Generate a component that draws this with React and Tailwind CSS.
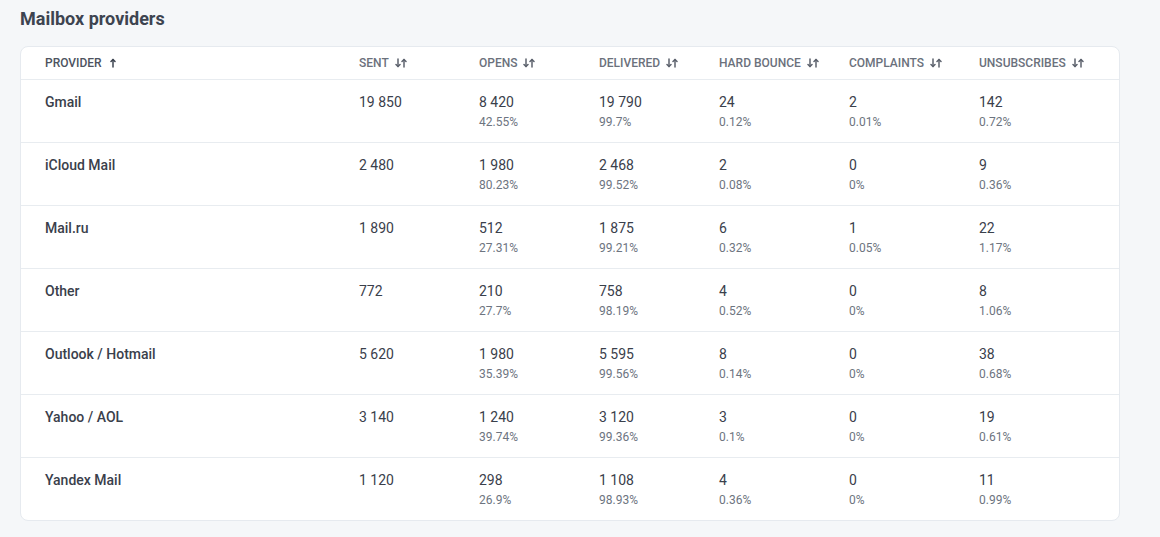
const COLUMNS = [
  { key: "sent", label: "Sent" },
  { key: "opens", label: "Opens" },
  { key: "delivered", label: "Delivered" },
  { key: "hard", label: "Hard bounce" },
  { key: "complaints", label: "Complaints" },
  { key: "unsubs", label: "Unsubscribes" },
];

const ROWS = [
  { name: "Gmail", sent: ["19 850"], opens: ["8 420", "42.55%"], delivered: ["19 790", "99.7%"], hard: ["24", "0.12%"], complaints: ["2", "0.01%"], unsubs: ["142", "0.72%"] },
  { name: "iCloud Mail", sent: ["2 480"], opens: ["1 980", "80.23%"], delivered: ["2 468", "99.52%"], hard: ["2", "0.08%"], complaints: ["0", "0%"], unsubs: ["9", "0.36%"] },
  { name: "Mail.ru", sent: ["1 890"], opens: ["512", "27.31%"], delivered: ["1 875", "99.21%"], hard: ["6", "0.32%"], complaints: ["1", "0.05%"], unsubs: ["22", "1.17%"] },
  { name: "Other", sent: ["772"], opens: ["210", "27.7%"], delivered: ["758", "98.19%"], hard: ["4", "0.52%"], complaints: ["0", "0%"], unsubs: ["8", "1.06%"] },
  { name: "Outlook / Hotmail", sent: ["5 620"], opens: ["1 980", "35.39%"], delivered: ["5 595", "99.56%"], hard: ["8", "0.14%"], complaints: ["0", "0%"], unsubs: ["38", "0.68%"] },
  { name: "Yahoo / AOL", sent: ["3 140"], opens: ["1 240", "39.74%"], delivered: ["3 120", "99.36%"], hard: ["3", "0.1%"], complaints: ["0", "0%"], unsubs: ["19", "0.61%"] },
  { name: "Yandex Mail", sent: ["1 120"], opens: ["298", "26.9%"], delivered: ["1 108", "98.93%"], hard: ["4", "0.36%"], complaints: ["0", "0%"], unsubs: ["11", "0.99%"] },
];

const GRID = "grid grid-cols-[314px_120px_120px_120px_130px_130px_1fr] pl-[24px]";

function UpArrow() {
  return (
    <svg width="6" height="10" viewBox="0 0 6 10" fill="none" stroke="currentColor" strokeWidth="1.5" strokeLinecap="round" strokeLinejoin="round">
      <line x1="3" y1="1.5" x2="3" y2="9" />
      <polyline points="1 3.5 3 1.5 5 3.5" />
    </svg>
  );
}

function DownArrow() {
  return (
    <svg width="6" height="10" viewBox="0 0 6 10" fill="none" stroke="currentColor" strokeWidth="1.5" strokeLinecap="round" strokeLinejoin="round">
      <line x1="3" y1="1" x2="3" y2="8.5" />
      <polyline points="1 6.5 3 8.5 5 6.5" />
    </svg>
  );
}

function Cell({ value }) {
  return (
    <div className="pt-[12px]">
      <div className="text-[14px] leading-5 text-[#3a404b]">{value[0]}</div>
      {value[1] && (
        <div className="mt-[2px] text-[12px] leading-4 text-[#6d7480]">{value[1]}</div>
      )}
    </div>
  );
}

export default function App() {
  return (
    <div className="min-h-[537px] bg-[#f5f7f9] px-5 pt-[5px] font-['Roboto',sans-serif]">
      <h2 className="text-[18px] leading-7 font-bold text-[#3d4450]">Mailbox providers</h2>

      {/* table card */}
      <div className="mt-[13px] w-[1100px] overflow-hidden rounded-lg border border-[#e6eaef] bg-white">
        <div className={`${GRID} h-[33px] items-center border-b border-[#e8ecf0] text-[12px] font-medium uppercase`}>
          <div className="flex items-center gap-[8px] text-[#4d5360]">
            Provider
            <span className="text-[#3d4450]"><UpArrow /></span>
          </div>
          {COLUMNS.map((c) => (
            <div key={c.key} className="flex items-center gap-[6px] text-[#6b717c]">
              {c.label}
              <span className="flex text-[#5c626d]">
                <DownArrow />
                <UpArrow />
              </span>
            </div>
          ))}
        </div>

        {ROWS.map((row, i) => (
          <div
            key={row.name}
            className={`${GRID} ${i < ROWS.length - 1 ? "h-[63px] border-b border-[#e8ecf0]" : "h-[62px]"}`}
          >
            <div className="pt-[12px] text-[14px] leading-5 font-medium text-[#3a404b]">{row.name}</div>
            {COLUMNS.map((c) => (
              <Cell key={c.key} value={row[c.key]} />
            ))}
          </div>
        ))}
      </div>
    </div>
  );
}
